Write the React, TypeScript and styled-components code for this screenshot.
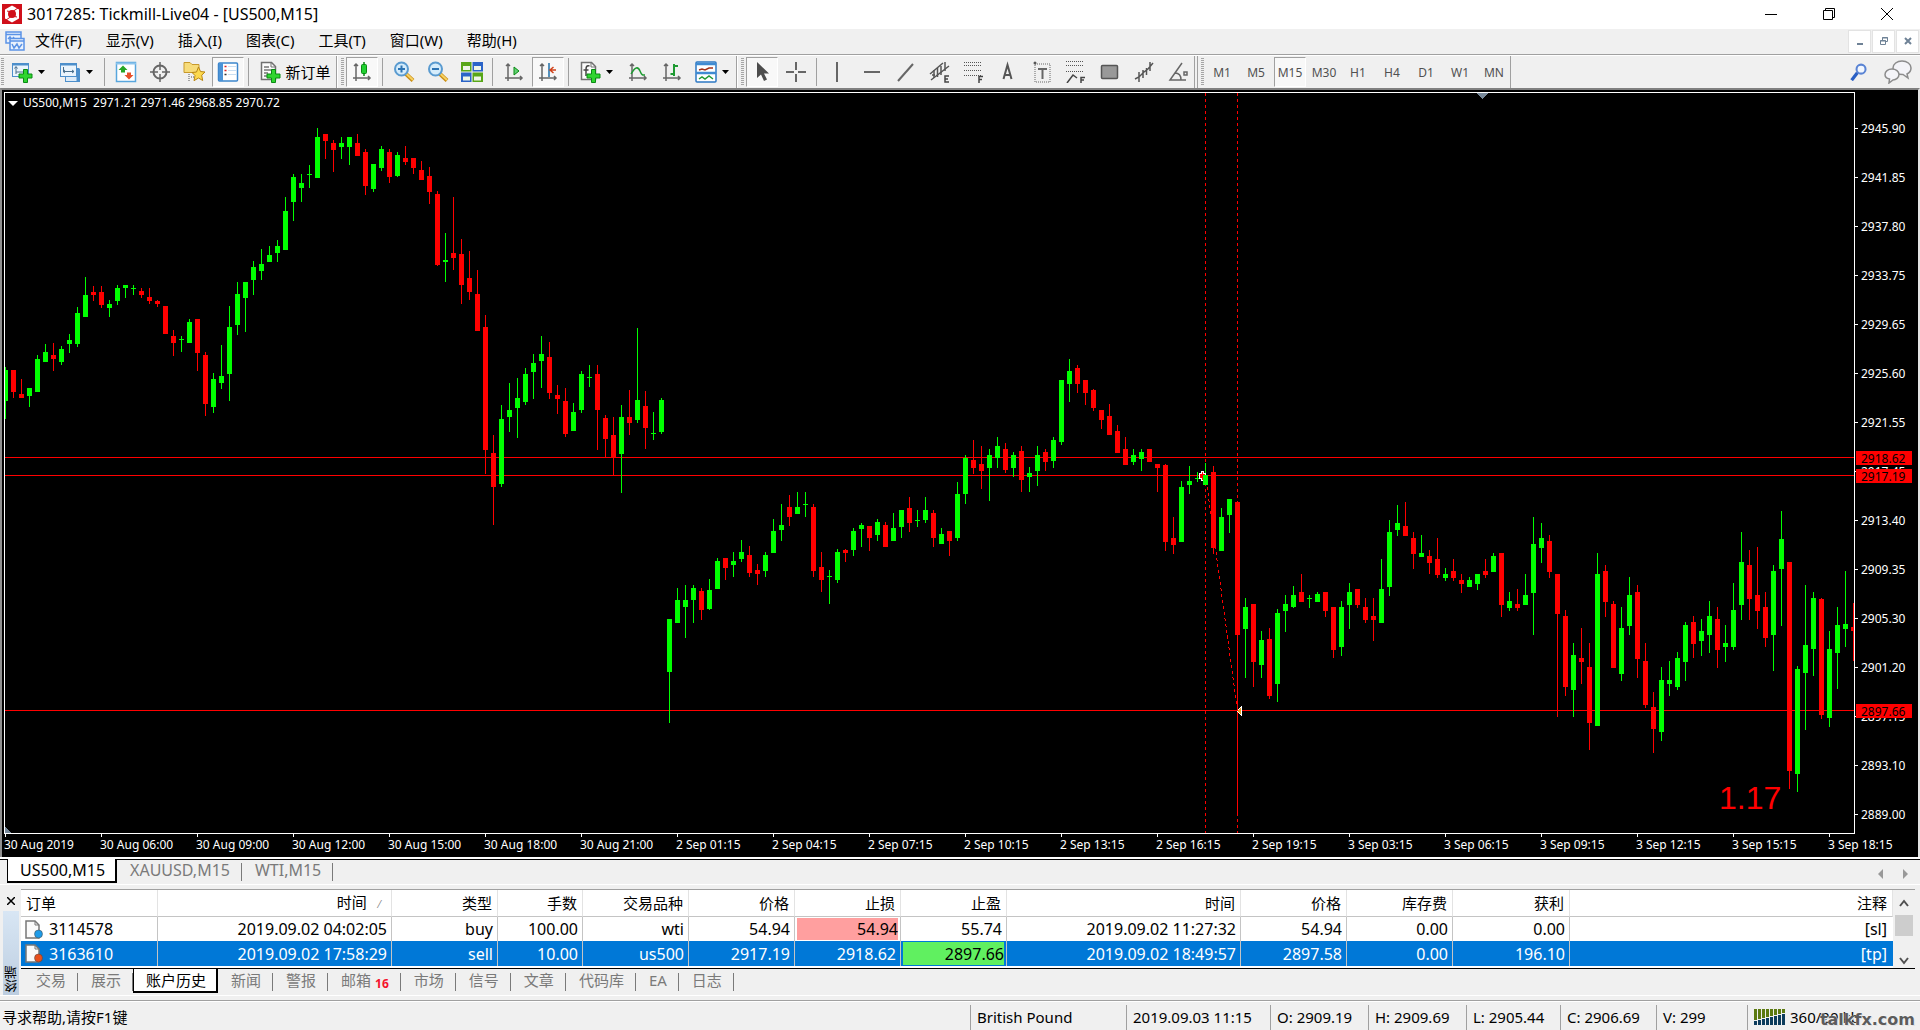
import React from "react";
import styled, { createGlobalStyle, css } from "styled-components";

const uiFont = `"Noto Sans", "Noto Sans CJK SC", sans-serif`;
const face = "#f0f0f0";
const line = "#a0a0a0";

const GlobalStyle = createGlobalStyle`
  *, *::before, *::after { box-sizing: border-box; }
  body { margin: 0; background: ${face}; font-family: ${uiFont}; font-size: 15px; line-height: 20px; color: #000; }
  button { font: inherit; color: inherit; background: none; border: 0; padding: 0; margin: 0; white-space: nowrap; }
`;

/* ---------- shell ---------- */
const App = styled.div`
  display: flex;
  flex-direction: column;
  height: 100vh;
  overflow: hidden;
`;
const TitleBar = styled.header`
  display: flex;
  align-items: center;
  height: 29px;
  padding: 0 4px 2px 2px;
  gap: 5px;
  background: #fff;
  flex: none;
`;
const Title = styled.h1`
  flex: 1;
  margin: 0;
  font-size: 16px;
  font-weight: 400;
`;
const WindowControls = styled.div`
  display: flex;
`;
const WindowButton = styled.button`
  width: 58px;
  height: 27px;
  display: grid;
  place-items: center;
`;
const MenuBar = styled.nav`
  display: flex;
  align-items: center;
  height: 26px;
  padding: 0 1px 1px 5px;
  border-bottom: 1px solid ${line};
  flex: none;
`;
const MenuList = styled.div`
  display: flex;
  flex: 1;
  gap: 24px;
  padding-left: 10px;
`;
const MenuButton = styled.button`
  padding-bottom: 2px;
`;
const ChildControls = styled.div`
  display: flex;
  gap: 1px;
`;
const ChildButton = styled.button`
  width: 23px;
  height: 23px;
  display: grid;
  place-items: center;
  background: #fff;
  border: 1px solid #e3e3e3;
`;

/* ---------- toolbar ---------- */
const ToolBar = styled.div`
  display: flex;
  align-items: stretch;
  height: 33px;
  border-top: 1px solid #fff;
  flex: none;
`;
const Group = styled.div<{ $first?: boolean; $apart?: boolean }>`
  display: flex;
  align-items: center;
  gap: 2px;
  padding-left: ${(p) => (p.$first ? 1 : 3)}px;
  margin-left: ${(p) => (p.$apart ? 2 : 0)}px;
  border-right: 1px solid ${line};
  border-left: ${(p) => (p.$first ? "0" : p.$apart ? `1px solid ${line}` : "1px solid #fff")};
`;
const Grip = styled.span`
  width: 3px;
  height: 28px;
  background: repeating-linear-gradient(#a5a5a5 0 1px, transparent 1px 2px);
`;
const Sep = styled.span`
  width: 1px;
  height: 28px;
  margin: 0 3px 0 2px;
  background: ${line};
`;
const ToolButton = styled.button<{ $on?: boolean; $width?: number }>`
  display: flex;
  align-items: center;
  justify-content: center;
  gap: 4px;
  width: ${(p) => p.$width || 32}px;
  height: 30px;
  border: 1px solid transparent;
  ${(p) =>
    p.$on &&
    css`
      background: #f8f8f8;
      border-color: ${line} #fff #fff ${line};
    `}
`;
const SplitButton = styled(ToolButton)`
  width: 46px;
  justify-content: flex-start;
  padding-left: 4px;
  gap: 5px;
`;
const PeriodButton = styled(ToolButton)`
  padding-top: 2px;
  font-size: 12px;
  color: #505050;
`;
const ToolEnd = styled.div`
  display: flex;
  align-items: center;
  gap: 7px;
  margin-left: auto;
  padding-right: 6px;
`;

/* ---------- chart window ---------- */
const ChartWindow = styled.main`
  flex: 1;
  min-height: 0;
  display: grid;
  grid-template-columns: minmax(0, 1fr) 63px;
  grid-template-rows: minmax(0, 1fr) 23px;
  padding: 2px 0 0 2px;
  background: #000;
  border: solid;
  border-width: 2px 2px 0 2px;
  border-color: #808080 #e3e3e3 #fff #8f8f8f;
  font-size: 12px;
  line-height: 14px;
  color: #fff;
`;
const Plot = styled.section`
  position: relative;
  border: 1px solid #fff;
  overflow: hidden;
`;
const PlotCanvas = styled.svg`
  display: block;
  width: 100%;
  height: 100%;
`;
const PlotCaption = styled.div`
  position: absolute;
  top: 3px;
  left: 3px;
  display: flex;
  align-items: center;
  gap: 5px;
  white-space: pre;
`;
const PriceAxis = styled.div`
  position: relative;
  padding-top: 30px;
  overflow: hidden;
`;
const PriceLabel = styled.div`
  display: flex;
  align-items: center;
  gap: 3px;
  height: 14px;
  margin-bottom: 35px;
  &::before {
    content: "";
    width: 3px;
    height: 1px;
    margin-bottom: 2px;
    background: #fff;
  }
`;
const PriceTag = styled.div`
  position: absolute;
  left: 1px;
  width: 56px;
  height: 14px;
  padding-left: 5px;
  line-height: 15px;
  background: #f00;
  color: #000;
`;
const TimeAxis = styled.div`
  grid-column: 1 / -1;
  display: flex;
  overflow: hidden;
`;
const TimeLabel = styled.div`
  flex: 0 0 96px;
  white-space: nowrap;
  &::before {
    content: "";
    display: block;
    width: 1px;
    height: 3px;
    margin: 0 0 1px 1px;
    background: #fff;
  }
`;

/* ---------- tabs ---------- */
const ChartTabs = styled.div`
  display: flex;
  align-items: flex-start;
  height: 28px;
  padding: 0 12px 0 7px;
  border-top: 2px solid #fff;
  border-bottom: 1px solid #fff;
  box-shadow: inset 0 1px 0 #000;
  font-size: 16px;
  flex: none;
`;
const Tab = styled.button<{ $active?: boolean }>`
  display: flex;
  align-items: center;
  height: 24px;
  padding: 0 12px 2px 13px;
  color: #7a7a7a;
  position: relative;
  ${(p) =>
    p.$active
      ? css`
          padding: 0 10px 0 12px;
          background: #fff;
          color: #000;
          border: solid #000;
          border-width: 0 2px 2px 1px;
        `
      : css`
          &::after {
            content: "";
            position: absolute;
            right: 0;
            top: 4px;
            height: 18px;
            width: 1px;
            background: #7a7a7a;
          }
        `}
`;
const TabArrows = styled.div`
  display: flex;
  gap: 18px;
  margin-left: auto;
  padding-top: 4px;
`;
const Count = styled.sub`
  align-self: flex-end;
  margin-left: 4px;
  font-size: 12px;
  line-height: 14px;
  font-weight: 700;
  color: #f5142d;
`;

/* ---------- terminal ---------- */
const Terminal = styled.section`
  display: flex;
  height: 111px;
  padding: 4px 5px 0 0;
  border-bottom: 1px solid #fff;
  flex: none;
`;
const Dock = styled.div`
  display: flex;
  flex-direction: column;
  align-items: center;
  width: 21px;
  padding: 0 2px;
  gap: 2px;
`;
const DockTitle = styled.h2`
  flex: 1;
  width: 16px;
  margin: 0;
  padding-top: 3px;
  background: linear-gradient(#bccde0, #d8e6f4);
  writing-mode: vertical-rl;
  transform: rotate(180deg);
  font-size: 13px;
  line-height: 16px;
  font-weight: 400;
`;
const TerminalBody = styled.div`
  flex: 1;
  min-width: 0;
  border-top: 1px solid ${line};
`;
const OrdersPane = styled.div`
  display: flex;
  align-items: flex-start;
  height: 79px;
  overflow: hidden;
  background: #fff;
  border-bottom: 1px solid #000;
`;
const Orders = styled.table`
  flex: 1;
  width: 100%;
  table-layout: fixed;
  border-collapse: separate;
  border-spacing: 0;
`;
const Head = styled.th<{ $left?: boolean }>`
  height: 27px;
  padding: 0 5px;
  text-align: ${(p) => (p.$left ? "left" : "right")};
  font-weight: 400;
  white-space: nowrap;
  border-right: 1px solid #e3e3e3;
  border-bottom: 1px solid #c4c4c4;
`;
const SortMark = styled.span`
  margin: 0 6px 0 12px;
  font-size: 10px;
  color: #808080;
`;
const Row = styled.tr<{ $selected?: boolean }>`
  height: ${(p) => (p.$selected ? 25 : 24)}px;
  font-size: 16px;
  ${(p) => p.$selected && css`background: #0078d7; color: #fff;`}
`;
const Cell = styled.td<{ $fill?: string }>`
  padding: 0 4px;
  text-align: right;
  white-space: nowrap;
  border-right: 1px solid #c4c4c4;
  ${(p) =>
    p.$fill &&
    css`
      background: ${p.$fill} content-box;
      padding: 1px 2px;
      color: #000;
    `}
  &:last-child { border-right: 0; padding-right: 6px; }
`;
const OrderId = styled.span`
  display: flex;
  align-items: center;
  gap: 6px;
`;
const ScrollBar = styled.div`
  display: flex;
  flex-direction: column;
  align-items: center;
  width: 22px;
  height: 78px;
  padding: 7px 0;
  line-height: 8px;
  background: ${face};
`;
const ScrollThumb = styled.span`
  flex: none;
  width: 18px;
  height: 21px;
  margin: 8px 0 19px;
  background: #cdcdcd;
`;
const TerminalTabs = styled.div`
  display: flex;
  padding-left: 2px;
`;

/* ---------- status bar ---------- */
const StatusBar = styled.footer`
  position: relative;
  display: flex;
  align-items: stretch;
  height: 34px;
  padding-top: 4px;
  flex: none;
  &::before {
    content: "";
    position: absolute;
    inset: 4px 0 auto;
    height: 2px;
    background: linear-gradient(${line} 50%, #fff 50%);
  }
`;
const StatusHint = styled.span`
  flex: 1;
  padding: 7px 2px 0;
`;
const StatusCell = styled.span<{ $width: number }>`
  width: ${(p) => p.$width}px;
  display: flex;
  gap: 5px;
  margin-top: 5px;
  padding: 2px 0 0 6px;
  border-left: 1px solid ${line};
  white-space: nowrap;
`;
const Watermark = styled.span`
  position: absolute;
  right: 5px;
  bottom: 0;
  font-family: "DejaVu Sans", sans-serif;
  font-weight: 700;
  font-size: 16px;
  color: #5c5c5c;
  text-shadow: 0 0 2px #fff, 1px 1px 0 #ddd;
`;

/* ---------- icons ---------- */
type Kids = { children: React.ReactNode; size?: number };
const Ico = ({ children, size = 22 }: Kids) => (
  <svg width={size} height={size} viewBox="0 0 22 22" fill="none" aria-hidden="true">
    {children}
  </svg>
);
const Plus = () => (
  <path d="M12.500 8.500h4v4.500h4.500v4h-4.500v4.500h-4v-4.500h-4.500v-4h4.500z" fill="#2fd52f" stroke="#0a8a14" />
);
const Caret = () => (
  <svg width="7" height="4" aria-hidden="true"><path d="M0 0h7L3.500 4z" fill="#000" /></svg>
);
const Axes = () => (
  <path d="M5 3v17M2 17h17M3 5l2-2 2 2M17 15l2 2-2 2" stroke="#666" strokeWidth="1.500" />
);
const TFrame = () => (
  <>
    <rect x="1.500" y="2.500" width="16" height="13" fill="#eaf4fc" stroke="#4d8fcb" />
    <path d="M1 3.500h17" stroke="#4d8fcb" strokeWidth="2" />
    <path d="M5 6v7M3.500 7.500l1.500-2 1.500 2M5 11h9M12 9.500l2 1.500-2 1.500" stroke="#4a6f8c" />
  </>
);
const Lens = ({ minus }: { minus?: boolean }) => (
  <>
    <path d="M13 13l7 6.500" stroke="#c98d14" strokeWidth="4" />
    <path d="M13 12.500l7 6.500" stroke="#f7d263" strokeWidth="2" />
    <circle cx="8.500" cy="8" r="6.500" fill="#d5ecfb" stroke="#5a9bd0" strokeWidth="2" />
    <path d={minus ? "M5 8h7" : "M5 8h7M8.500 4.500v7"} stroke="#2d74b4" strokeWidth="2" />
  </>
);
const Dots = ({ y }: { y: number[] }) => (
  <>{y.map((v) => <path key={v} d={`M1 ${v}.5h18`} stroke="#555" strokeDasharray="1 1" shapeRendering="crispEdges" />)}</>
);
const Doc = () => (
  <>
    <path d="M2.500 1.500h10l4 4v13h-14z" fill="#fbfbfb" stroke="#707070" strokeWidth="1.500" />
    <path d="M12 1.500v4.500h4.500" stroke="#707070" />
  </>
);
const icons: Record<string, React.ReactNode> = {
  newChart: <><TFrame /><Plus /></>,
  profiles: <>
    <rect x="6.500" y="8.500" width="14" height="12" fill="#dcebf8" stroke="#4d8fcb" /><path d="M19 7v13" stroke="#4d8fcb" strokeWidth="3" />
    <rect x="1.500" y="2.500" width="16" height="13" fill="#eaf4fc" stroke="#4d8fcb" /><path d="M1 3.500h17" stroke="#4d8fcb" strokeWidth="2" />
    <path d="M4.500 6v5M4 10.500h11M13 9l2 1.500-2 1.500M6 9l-2 1.500 2 1.500" stroke="#4a6f8c" /></>,
  market: <>
    <rect x="1.500" y="1.500" width="19" height="19" fill="#fff" stroke="#58a6dd" strokeWidth="1.500" /><path d="M1 2.500h20" stroke="#8cc4ec" strokeWidth="2" />
    <path d="M8 4.500l4.500 4.500H10v2.500H6V9H3.500z" fill="#26a626" /><path d="M14 18.500l-4.500-4.500H12v-2.500h4V14h2.500z" fill="#e8502a" /></>,
  navigator: <><circle cx="11" cy="11" r="6.500" stroke="#666" strokeWidth="2" /><path d="M11 1v8M11 13v8M1 11h8M13 11h8" stroke="#666" strokeWidth="1.500" /></>,
  favorites: <>
    <path d="M1 1.500h6l2 2h7v8H1z" fill="#f7dc7a" stroke="#c7992c" /><path d="M6 13v8M8 16h4" stroke="#555" strokeDasharray="1 1" />
    <path d="M15.500 6l2 4.500 4.500.5-3.300 3.200 1 5.300-4.200-2.500-4.500 2.700 1-5.200L9 11.500l4.500-.5z" fill="#fcd94e" stroke="#b98614" /></>,
  terminal: <>
    <rect x="1.500" y="2" width="19" height="18" rx="1" fill="#fff" stroke="#3d86cc" strokeWidth="1.500" /><path d="M4 2v18" stroke="#4b93d6" strokeWidth="4" />
    <path d="M7.500 5.500h2M7.500 9.500h2" stroke="#e02020" strokeWidth="1.500" /><path d="M7.500 13.500h2" stroke="#333" strokeWidth="1.500" /><path d="M11 5.500h8M11 9.500h8M11 13.500h8" stroke="#c8def2" /></>,
  order: <><Doc /><path d="M5 6h5M5 9h8M5 12h4M5 15h3" stroke="#777" strokeWidth="1.500" /><Plus /></>,
  candles: <><Axes /><path d="M13 1v14" stroke="#0a8a14" strokeWidth="1.500" /><rect x="10.500" y="3.500" width="5" height="9" rx="1" fill="#20d030" stroke="#0a8a14" /></>,
  tile: <>
    <rect x="0" y="1" width="10.500" height="9.500" fill="#58a618" /><rect x="11.500" y="1" width="10.500" height="9.500" fill="#2b64c8" />
    <rect x="0" y="11.500" width="10.500" height="9.500" fill="#2b64c8" /><rect x="11.500" y="11.500" width="10.500" height="9.500" fill="#58a618" />
    <path d="M2 5h7v4H2zM13 5h7v4h-7zM2 15.500h7v4H2zM13 15.500h7v4h-7z" fill="#eef5e8" /></>,
  scroll: <><Axes /><path d="M11 6l5 4-5 4z" fill="#5fd070" stroke="#0a8a14" /></>,
  shift: <><Axes /><path d="M12 2v14" stroke="#1f6fa8" strokeWidth="1.500" /><path d="M13 9h6M16.500 6L13 9l3.500 3" stroke="#d0421b" strokeWidth="1.500" /></>,
  indicator: <><Doc /><path d="M10.500 5c-3-1-3.500 1-3.500 4v6M4.500 9h5" stroke="#444" strokeWidth="1.500" /><Plus /></>,
  curve: <><Axes /><path d="M4 13c4-7 7-8 9-3s3 4 5 4" stroke="#1e9a32" strokeWidth="1.500" /></>,
  bars: <><Axes /><path d="M13 3v12M13 5h4M9.500 13H13" stroke="#1e9a32" strokeWidth="2" /></>,
  template: <>
    <rect x="1" y="1" width="20" height="20" rx="1" fill="#fff" stroke="#2c78c4" strokeWidth="1.500" /><path d="M1 3h20M1 12h20" stroke="#3f8bd2" strokeWidth="2.500" />
    <path d="M4 9l3-1 3 1 4-2h4" stroke="#a33018" strokeWidth="1.500" /><path d="M4 18l3-2 3 2 4-3 4 3" stroke="#219a36" strokeWidth="1.500" /></>,
  cursor: <path d="M6 1v16l4-3.500 3 6.500 3-1.500-3-6h5z" fill="#4d4d4d" />,
  cross: <path d="M11 1v8M11 13v8M1 11h8M13 11h8" stroke="#666" strokeWidth="2" />,
  vline: <path d="M10 1v20" stroke="#666" strokeWidth="2" />,
  hline: <path d="M3 11h16" stroke="#666" strokeWidth="2" />,
  trend: <path d="M3 20L18 3" stroke="#666" strokeWidth="2" />,
  channel: <><path d="M1 13L14 2M2 19L20 5" stroke="#555" strokeWidth="1.500" /><path d="M5 9v8M8.500 7v9M12 5v9M16 1v9M3 14h3" stroke="#555" strokeWidth="1.500" /><path d="M20 15h-4v6h4M16 18h3" stroke="#444" strokeWidth="1.500" /></>,
  fibo: <><Dots y={[1, 4, 9, 14]} /><path d="M20 15.500h-4V22M16 18.500h3" stroke="#444" strokeWidth="1.500" /></>,
  letter: <path d="M6.500 18L10.500 4l4 14M8 14h5" stroke="#555" strokeWidth="2" />,
  label: <><rect x="4" y="3" width="15" height="18" stroke="#666" strokeDasharray="1 1" /><path d="M7 8h9M11.500 8v10" stroke="#666" strokeWidth="2" /><circle cx="4" cy="2" r="1.500" fill="#555" /></>,
  fiboFan: <><Dots y={[0, 4, 10]} /><path d="M2 22l6-8 4 3M20 16.500h-4V22M16 19h3" stroke="#444" strokeWidth="1.500" /></>,
  box: <rect x="2.500" y="4.500" width="16" height="13" rx="1" fill="#999" stroke="#555" strokeWidth="1.500" />,
  wave: <path d="M2 18l4-2 5-5 4-3 5-6M6 11v10M10 9v8M13.500 7v7M17 1v9" stroke="#555" strokeWidth="1.500" />,
  angle: <path d="M15 2L3 19h16M8 12c4 0 6 3 6 7M17 11h3v3h-3z" stroke="#666" strokeWidth="1.500" />,
};
const Icon = ({ name }: { name: string }) => <Ico>{icons[name]}</Ico>;

/* ---------- chart data: direction, high, body top, body bottom, low ---------- */
const bars = `
g367,370,401,419 r370,370,392,398 r379,394,398,398 g388,388,396,407 g355,359,392,392 g344,352,362,362 r343,355,359,371 g346,349,362,365
g334,340,344,353 g307,313,344,347 g277,295,317,317 r286,292,295,301 r286,292,305,308 g300,304,308,317 g285,288,301,305 g285,285,288,298
g285,288,289,295 r288,291,295,298 r288,297,301,304 r300,301,304,307 r306,306,334,334 r330,336,343,356 g336,339,340,352 g319,322,343,343
r319,319,353,371 r352,355,404,416 g373,379,407,413 g345,376,383,389 g306,327,374,401 g282,294,325,335 g282,282,298,332 g261,267,280,295
g249,264,271,280 g246,255,262,262 g240,246,253,262 g197,211,250,250 g174,177,202,221 g174,183,188,202 g165,174,175,188 g128,137,178,178
r134,134,141,159 r140,143,150,172 g137,143,147,159 g137,137,147,165 r134,143,156,156 r149,152,186,195 g164,164,189,192 g146,149,168,171
r149,152,177,183 g152,155,176,177 r146,158,162,165 r158,158,168,174 r161,170,180,180 r167,176,192,204 r191,194,265,266 g233,260,262,282
r197,253,258,270 r239,254,285,304 r251,278,292,300 r270,294,331,331 r315,327,450,474 r435,453,487,525 g405,419,484,487 g383,410,417,432
g378,398,408,438 g368,374,402,405 g354,363,372,399 g336,354,361,388 r342,357,393,399 r385,395,399,414 r388,401,434,437 g403,412,431,431
g371,374,410,413 g365,377,378,387 r365,374,410,450 r415,418,439,457 r417,435,458,475 g405,417,454,493 r390,417,423,435 g328,400,420,423
r391,406,428,449 g412,433,434,440 g398,400,432,434 g619,619,672,723 g588,600,623,623 g585,600,607,638 g585,588,600,623 r588,591,610,620
g579,590,609,610 g558,561,589,589 r558,558,568,580 g552,561,565,577 g540,552,559,562 r546,555,573,577 r564,570,574,585 g552,555,571,577
g519,531,553,553 g504,525,530,541 r495,507,517,526 g492,507,514,514 g492,504,505,517 r504,507,571,577 r552,567,580,592 g570,576,577,604
g549,552,580,583 r549,550,553,562 g528,531,550,556 g523,525,529,547 r526,526,538,551 g519,522,535,541 r522,525,547,547 g513,528,541,541
g510,510,527,538 r497,508,523,532 g510,520,521,527 g497,510,520,523 r510,513,538,547 g528,534,544,544 r531,531,541,556 g482,494,538,541
g455,458,494,504 r440,460,468,474 r446,464,471,489 g449,455,468,501 g437,446,458,468 r443,449,470,473 g452,455,468,477 r446,451,480,492
g467,473,477,492 g446,455,471,486 r449,452,462,471 g437,440,461,468 g380,380,442,445 g359,371,384,402 r365,368,384,393 r380,380,393,405
r389,390,408,411 r410,410,420,429 r404,416,435,435 r425,431,453,453 r437,449,465,465 g449,455,462,465 g449,452,459,471 r449,449,462,462
r464,464,468,492 r464,465,542,551 r517,538,545,554 g481,487,542,542 g466,481,485,494 g472,478,479,482 g463,475,485,485 r466,472,548,554
g508,517,551,551 g499,499,515,533 r501,502,635,815 g598,607,629,678 r604,604,662,687 g631,640,665,678 r628,639,696,699 g609,613,684,702
g595,604,611,632 g586,595,607,608 r574,592,602,602 g595,598,599,608 g592,594,602,602 r592,592,611,617 r607,607,650,658 g601,607,647,656
g583,592,605,629 r589,589,605,608 r598,607,620,623 r598,616,620,641 g559,589,623,623 g520,532,587,596 g505,523,530,536 r502,526,536,536
r532,538,554,569 g535,553,557,557 r550,556,563,574 r538,559,575,578 g568,574,578,581 r559,571,578,581 r574,580,584,593 g577,580,587,587
g574,574,584,590 r559,571,575,578 g553,556,572,572 r553,553,605,617 g592,601,608,611 r589,604,608,611 g574,595,605,605 g517,544,593,635
g523,538,548,563 r535,541,572,578 r574,574,614,717 r610,616,687,696 g643,655,690,717 r628,658,662,684 r643,667,723,750 g553,574,726,726
r565,571,602,617 r601,604,668,668 g607,628,674,681 g577,595,626,635 r585,592,659,678 r643,661,705,708 r692,707,729,753 g667,680,732,741
g661,680,684,696 g652,658,687,690 g622,625,662,681 r616,622,644,658 g619,631,641,656 g601,616,635,653 r607,619,650,668 g625,643,647,662
g583,610,647,650 g532,562,605,620 r550,565,599,620 r547,595,611,629 r592,607,638,647 g565,571,635,671 g511,539,569,626 r562,562,771,789
g666,669,774,792 g585,645,673,730 g592,598,649,676 r598,599,715,719 g631,649,718,727 g607,625,653,689 g571,624,629,647 r603,627,631,661`
  .trim()
  .split(/\s+/)
  .map((s) => ({ up: s[0] === "g", v: s.slice(1).split(",").map(Number) }));

const prices = ["2945.90", "2941.85", "2937.80", "2933.75", "2929.65", "2925.60", "2921.55", "2917.45", "2913.40", "2909.35", "2905.30", "2901.20", "2897.15", "2893.10", "2889.00"];
const tags: [string, number][] = [["2918.62", 359], ["2917.19", 377], ["2897.66", 612]];
const times = ["30 Aug 2019", "30 Aug 06:00", "30 Aug 09:00", "30 Aug 12:00", "30 Aug 15:00", "30 Aug 18:00", "30 Aug 21:00", "2 Sep 01:15", "2 Sep 04:15", "2 Sep 07:15", "2 Sep 10:15", "2 Sep 13:15", "2 Sep 16:15", "2 Sep 19:15", "3 Sep 03:15", "3 Sep 06:15", "3 Sep 09:15", "3 Sep 12:15", "3 Sep 15:15", "3 Sep 18:15"];

const Candles = () => (
  <PlotCanvas role="img" aria-label="US500,M15">
    <g transform="translate(-5 -93)" shapeRendering="crispEdges">
      {[457, 475, 710].map((y) => <rect key={y} x="5" y={y} width="100%" height="1" fill="#f00" />)}
      {[1205, 1237].map((x) => <path key={x} d={`M${x}.5 93V1400`} stroke="#f00" strokeDasharray="3 3" />)}
      <path d="M1205.500 475L1237.500 711" stroke="#f00" strokeDasharray="3 3" />
      {bars.map(({ up, v }, i) => {
        const x = 5 + i * 8;
        const fill = up ? "#0f0" : "#f00";
        return (
          <g key={i} fill={fill}>
            <rect x={x} y={v[0]} width="1" height={v[3] - v[0]} />
            <rect x={x - 2} y={v[1]} width="5" height={v[2] - v[1]} />
          </g>
        );
      })}
      <path d="M1199 473h2v-2h2v2h2v5h-2v2h-2v-2h-2z" fill="#f00" stroke="#fff" />
      <rect x="1203" y="475" width="5" height="10" fill="#0f0" />
      <path d="M1241 707v8l-4-4z" fill="#e8a020" stroke="#fff" />
      <path d="M1237.500 635v76" stroke="#f00" />
      <path d="M1477 93h11l-5.500 6z" fill="#778899" />
      <path d="M5 827v6h6z" fill="#778899" />
    </g>
    <text x="1714" y="716" fill="#f00" fontFamily="Liberation Sans, Arial, sans-serif" fontSize="32">1.17</text>
  </PlotCanvas>
);

/* ---------- table data ---------- */
const columns: [string, number | null][] = [["订单", 137], ["时间", 234], ["类型", 106], ["手数", 85], ["交易品种", 106], ["价格", 106], ["止损", 106], ["止盈", 106], ["时间", 234], ["价格", 106], ["库存费", 106], ["获利", 117], ["注释", null]];
const orders = [
  { dot: "#1e9be8", cells: ["3114578", "2019.09.02 04:02:05", "buy", "100.00", "wti", "54.94", "54.94", "55.74", "2019.09.02 11:27:32", "54.94", "0.00", "0.00", "[sl]"], fill: 6, color: "#ff9f9f" },
  { dot: "#e8501e", cells: ["3163610", "2019.09.02 17:58:29", "sell", "10.00", "us500", "2917.19", "2918.62", "2897.66", "2019.09.02 18:49:57", "2897.58", "0.00", "196.10", "[tp]"], fill: 7, color: "#60f060", selected: true },
];
const status: [string, number][] = [["British Pound", 156], ["2019.09.03 11:15", 144], ["O: 2909.19", 98], ["H: 2909.69", 98], ["L: 2905.44", 94], ["C: 2906.69", 96], ["V: 299", 91]];

const Tool = ({ name, on }: { name: string; on?: boolean }) => (
  <ToolButton $on={on} aria-label={name}><Icon name={name} /></ToolButton>
);
const Split = ({ name }: { name: string }) => (
  <SplitButton aria-label={name}><Icon name={name} /><Caret /></SplitButton>
);
const Chevron = ({ down }: { down?: boolean }) => (
  <svg width="10" height="8" fill="none" aria-hidden="true"><path d={down ? "M1 1l4 5 4-5" : "M1 7l4-5 4 5"} stroke="#505050" strokeWidth="2" /></svg>
);

export default function TradingTerminal() {
  return (
    <App>
      <GlobalStyle />
      <TitleBar>
        <svg width="20" height="20" viewBox="0 0 20 20" aria-hidden="true">
          <rect width="20" height="20" fill="#d0101a" />
          <path d="M10 1.500l7 4v9l-7 4-7-4v-9z" fill="#fff" />
          <circle cx="10" cy="10" r="4" fill="#d0101a" />
          <path d="M5 7l5 1 6-4M15 13l-5-1-6 4" fill="none" stroke="#d0101a" />
        </svg>
        <Title>3017285: Tickmill-Live04 - [US500,M15]</Title>
        <WindowControls>
          <WindowButton aria-label="Minimize"><svg width="12" height="12"><path d="M0 6.500h12" stroke="#000" /></svg></WindowButton>
          <WindowButton aria-label="Restore"><svg width="12" height="12" fill="none" stroke="#000"><path d="M.5 2.500h9v9h-9zM2.500 2.500v-2h9v9h-2" /></svg></WindowButton>
          <WindowButton aria-label="Close"><svg width="12" height="12" stroke="#000"><path d="M0 0l12 12M12 0L0 12" /></svg></WindowButton>
        </WindowControls>
      </TitleBar>

      <MenuBar>
        <svg width="20" height="20" viewBox="0 0 20 20" fill="#eaf2fd" stroke="#5b93e6" strokeWidth="1.500" aria-hidden="true">
          <rect x="1" y="1" width="15" height="11" /><path d="M1 3.500h15M3 8l2-2 2 3 2-3" />
          <rect x="5" y="7.500" width="14" height="11.500" /><path d="M5 10h14M7 13l2 4 3-4 2 4 3-4" />
        </svg>
        <MenuList>
          {["文件(F)", "显示(V)", "插入(I)", "图表(C)", "工具(T)", "窗口(W)", "帮助(H)"].map((m) => <MenuButton key={m}>{m}</MenuButton>)}
        </MenuList>
        <ChildControls>
          <ChildButton aria-label="Minimize chart"><svg width="10" height="10"><path d="M2 8h6" stroke="#6f8296" strokeWidth="2" /></svg></ChildButton>
          <ChildButton aria-label="Restore chart"><svg width="10" height="10" fill="none" stroke="#6f8296"><path d="M1.500 4.500h5v4h-5zM1 5h6M3.500 4V1.500h5v4H7M3 2h6" /></svg></ChildButton>
          <ChildButton aria-label="Close chart"><svg width="10" height="10"><path d="M2 2l6 6M8 2L2 8" stroke="#6f8296" strokeWidth="2" /></svg></ChildButton>
        </ChildControls>
      </MenuBar>

      <ToolBar role="toolbar">
        <Group $first>
          <Grip />
          <Split name="newChart" /><Split name="profiles" /><Sep />
          <Tool name="market" /><Tool name="navigator" /><Tool name="favorites" /><Tool name="terminal" on /><Sep />
          <ToolButton $width={82}><Icon name="order" />新订单</ToolButton>
        </Group>
        <Group>
          <Grip />
          <Tool name="candles" on /><Sep />
          <ToolButton aria-label="zoomIn"><Ico><Lens /></Ico></ToolButton>
          <ToolButton aria-label="zoomOut"><Ico><Lens minus /></Ico></ToolButton>
          <Tool name="tile" /><Sep />
          <Tool name="scroll" /><Tool name="shift" on /><Sep />
          <Split name="indicator" /><Tool name="curve" /><Tool name="bars" /><Split name="template" />
        </Group>
        <Group>
          <Grip />
          <Tool name="cursor" on /><Tool name="cross" /><Sep />
          {["vline", "hline", "trend", "channel", "fibo", "letter", "label", "fiboFan", "box", "wave", "angle"].map((n) => <Tool key={n} name={n} />)}
        </Group>
        <Group $apart>
          <Grip />
          {["M1", "M5", "M15", "M30", "H1", "H4", "D1", "W1", "MN"].map((p) => <PeriodButton key={p} $on={p === "M15"}>{p}</PeriodButton>)}
        </Group>
        <ToolEnd>
          <ToolButton aria-label="Search">
            <Ico size={18}><path d="M2 21l7-9" stroke="#2a5fc4" strokeWidth="4" /><circle cx="13.500" cy="7.500" r="5.500" fill="#f2f7ff" stroke="#5a84d4" strokeWidth="2.500" /></Ico>
          </ToolButton>
          <ToolButton aria-label="Chat">
            <svg width="28" height="24" viewBox="0 0 28 24" fill="#f4f4f8" stroke="#8c8c8c" strokeWidth="1.500" aria-hidden="true">
              <path d="M18 1c5 0 9 3 9 7 0 3-2 5-4 6l1 4-5-3.500c-6 0-10-2.500-10-6.500s4-7 9-7z" />
              <path d="M8 9c4 0 7 2.500 7 5.500S12 20 9 20l-4 3 .5-4C3 18.500 1 17 1 14.500 1 11.500 4 9 8 9z" />
            </svg>
          </ToolButton>
        </ToolEnd>
      </ToolBar>

      <ChartWindow>
        <Plot>
          <Candles />
          <PlotCaption>
            <svg width="10" height="5" aria-hidden="true"><path d="M0 0h10L5 5z" fill="#fff" /></svg>
            {"US500,M15  2971.21 2971.46 2968.85 2970.72"}
          </PlotCaption>
        </Plot>
        <PriceAxis>
          {prices.map((p) => <PriceLabel key={p}>{p}</PriceLabel>)}
          {tags.map(([p, y]) => <PriceTag key={p} style={{ top: y }}>{p}</PriceTag>)}
        </PriceAxis>
        <TimeAxis>
          {times.map((t) => <TimeLabel key={t}>{t}</TimeLabel>)}
        </TimeAxis>
      </ChartWindow>

      <ChartTabs>
        {["US500,M15", "XAUUSD,M15", "WTI,M15"].map((t, i) => <Tab key={t} $active={i === 0}>{t}</Tab>)}
        <TabArrows>
          <button aria-label="Previous tab"><svg width="6" height="10"><path d="M5 0v10L0 5z" fill="#999" /></svg></button>
          <button aria-label="Next tab"><svg width="6" height="10"><path d="M1 0v10l5-5z" fill="#999" /></svg></button>
        </TabArrows>
      </ChartTabs>

      <Terminal>
        <Dock>
          <button aria-label="Close terminal"><svg width="8" height="8"><path d="M0 0l8 8M8 0L0 8" stroke="#000" strokeWidth="1.500" /></svg></button>
          <DockTitle>终端</DockTitle>
        </Dock>
        <TerminalBody>
          <OrdersPane>
            <Orders>
              <colgroup>{columns.map(([, w], i) => <col key={i} width={w ?? undefined} />)}</colgroup>
              <thead>
                <tr>{columns.map(([c], i) => <Head key={i} $left={i === 0}>{c}{i === 1 && <SortMark>⁄</SortMark>}</Head>)}</tr>
              </thead>
              <tbody>
                {orders.map((o) => (
                  <Row key={o.dot} $selected={o.selected}>
                    {o.cells.map((c, i) => (
                      <Cell key={i} $fill={i === o.fill ? o.color : undefined}>
                        {i === 0 ? (
                          <OrderId>
                            <svg width="18" height="19" viewBox="0 0 18 19" aria-hidden="true">
                              <path d="M1 1h9l4 4v13H1z" fill="#fafafa" stroke="#777" strokeWidth="1.500" /><path d="M10 1v4h4" fill="none" stroke="#777" />
                              <circle cx="13.500" cy="14" r="4" fill={o.dot} stroke="#444" strokeOpacity=".5" />
                            </svg>
                            {c}
                          </OrderId>
                        ) : c}
                      </Cell>
                    ))}
                  </Row>
                ))}
              </tbody>
            </Orders>
            <ScrollBar>
              <button aria-label="Scroll up"><Chevron /></button>
              <ScrollThumb />
              <button aria-label="Scroll down"><Chevron down /></button>
            </ScrollBar>
          </OrdersPane>
          <TerminalTabs>
            {["交易", "展示", "账户历史", "新闻", "警报", "邮箱", "市场", "信号", "文章", "代码库", "EA", "日志"].map((t, i) => (
              <Tab key={t} $active={i === 2}>{t}{t === "邮箱" && <Count>16</Count>}</Tab>
            ))}
          </TerminalTabs>
        </TerminalBody>
      </Terminal>

      <StatusBar>
        <StatusHint>寻求帮助,请按F1键</StatusHint>
        {status.map(([s, w]) => <StatusCell key={s} $width={w}>{s}</StatusCell>)}
        <StatusCell $width={173}>
          <svg width="31" height="18" viewBox="0 -2 31 18" aria-hidden="true">
            {[0, 1, 2, 3, 4, 5, 6, 7].map((i) => (
              <g key={i}>
                <rect x={i * 4} y="0" width="3" height={11 - i} fill="#5c7a10" />
                <rect x={i * 4} y={12 - i} width="3" height={4 + i} fill="#0d3c5c" />
              </g>
            ))}
          </svg>
          360/20 kb
        </StatusCell>
        <Watermark>talkfx.com</Watermark>
      </StatusBar>
    </App>
  );
}
